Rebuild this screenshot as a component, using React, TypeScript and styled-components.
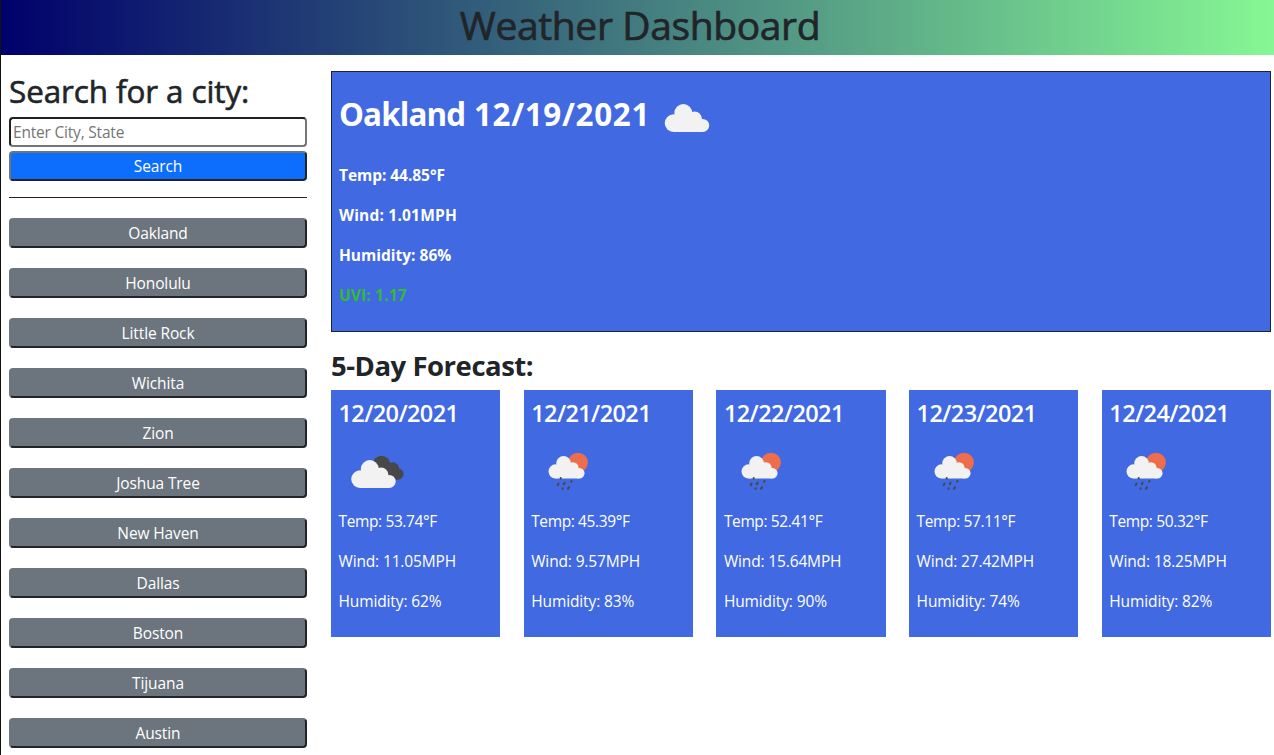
import React from "react";
import styled, { createGlobalStyle } from "styled-components";

const GlobalStyle = createGlobalStyle`
  *, *::before, *::after { box-sizing: border-box; }
  body {
    margin: 0;
    background: #fff;
    color: #212529;
    font-family: "Open Sans", "Noto Sans", sans-serif;
    font-size: 15.5px;
    line-height: 24px;
    overflow: hidden;
  }
  h1, h2, h3, h4, p { margin: 0; white-space: nowrap; }
`;

const Page = styled.div`
  height: 755px;
  overflow: hidden;
  border-left: 1px solid #111;
`;

const Header = styled.header`
  height: 55px;
  text-align: center;
  padding-left: 5px;
  background: linear-gradient(to right, #00006b, #86f794);
`;

const Title = styled.h1`
  font-size: 39px;
  font-weight: 500;
  line-height: 50px;
  letter-spacing: -0.37px;
  -webkit-text-stroke: 0.7px currentColor;
`;

const Columns = styled.div`
  display: flex;
  gap: 24px;
  padding: 16px 3px 0 8px;
`;

const Sidebar = styled.aside`
  flex: 0 0 298px;
`;

const SearchTitle = styled.h2`
  font-size: 31.4px;
  font-weight: 500;
  line-height: 40px;
  margin-bottom: 6px;
  letter-spacing: -0.08px;
  -webkit-text-stroke: 0.6px currentColor;
`;

const SearchInput = styled.input`
  display: block;
  width: 100%;
  height: 30px;
  padding: 1px 2px;
  border: 2px solid;
  border-color: #212121 #767676 #767676 #212121;
  border-radius: 4px;
  background: #fff;
  font: inherit;
  letter-spacing: -0.2px;
  &::placeholder { color: #757575; opacity: 1; }
`;

const Button = styled.button<{ $primary?: boolean }>`
  display: block;
  width: 100%;
  height: 30px;
  padding: 1px 6px;
  margin-top: ${(p) => (p.$primary ? "4px" : "20px")};
  border: 2px solid;
  border-color: #6c757d #212529 #212529 #6c757d;
  border-radius: 4px;
  background: ${(p) => (p.$primary ? "#0d6efd" : "#6c757d")};
  color: #fff;
  font: inherit;
  line-height: 24px;
  letter-spacing: -0.12px;
`;

const Divider = styled.hr`
  height: 1px;
  margin: 16px 0 0;
  border: 0;
  background: #212529;
`;

const Main = styled.main`
  flex: 1;
  min-width: 0;
`;

const Current = styled.section`
  height: 261px;
  padding: 18px 7px 0;
  border: 1px solid #212529;
  background: #4169e1;
  color: #fff;
  font-weight: 700;
`;

const CurrentHead = styled.div`
  display: flex;
  align-items: center;
  height: 50px;
  margin-bottom: 23px;
`;

const CityDate = styled.h2`
  font-size: 31.4px;
  font-weight: 700;
  line-height: 48px;
  padding-bottom: 2px;
  letter-spacing: 0.65px;
`;

const CityName = styled.span`
  letter-spacing: -0.9px;
`;

const Stat = styled.p<{ $good?: boolean; $spacing?: number }>`
  height: 24px;
  margin-bottom: 16px;
  letter-spacing: ${(p) => p.$spacing ?? 0}px;
  color: ${(p) => (p.$good ? "#32bc32" : "inherit")};
`;

const ForecastTitle = styled.h3`
  font-size: 27.5px;
  font-weight: 700;
  line-height: 36px;
  margin: 16px 0 6px;
  letter-spacing: -0.48px;
`;

const Forecast = styled.div`
  display: flex;
  justify-content: space-between;
`;

const DayCard = styled.article`
  width: 18%;
  height: 247px;
  padding: 9px 7.5px 0;
  background: #4169e1;
  color: #fff;
`;

const DayDate = styled.h4`
  font-size: 23.5px;
  font-weight: 600;
  line-height: 29px;
  letter-spacing: -0.6px;
`;

const DayIcon = styled.div`
  height: 81px;
  padding-top: 16px;
`;

const Icon = styled.svg`
  display: block;
  width: 80px;
  height: 60px;
  flex: none;
`;

const WhiteCloud = () => (
  <g fill="#f2f2f2">
    <circle cx="8.8" cy="19.1" r="8.8" />
    <circle cx="18.6" cy="9" r="9" />
    <circle cx="30" cy="14.8" r="7.2" />
    <circle cx="38" cy="21.4" r="6.5" />
    <path d="M8.8 14H30L38 20V27.9H8.8Z" />
  </g>
);

const CloudIcon = () => (
  <Icon viewBox="0 0 80 60">
    <g transform="translate(14.7 19)">
      <WhiteCloud />
    </g>
  </Icon>
);

const BrokenCloudsIcon = () => (
  <Icon viewBox="0 0 80 60">
    <g fill="#484848">
      <circle cx="42.5" cy="20.5" r="8.7" />
      <circle cx="53.5" cy="25" r="6.7" />
      <circle cx="58.8" cy="30" r="5.8" />
      <path d="M40 22H54L58.8 28V35.8H40Z" />
    </g>
    <g transform="translate(12.2 16)">
      <WhiteCloud />
    </g>
  </Icon>
);

const RainIcon = () => (
  <Icon viewBox="0 0 80 60">
    <circle cx="47" cy="18.6" r="9.9" fill="#ec6e4c" />
    <g transform="translate(17.5 12) scale(0.81)">
      <WhiteCloud />
    </g>
    <g stroke="#484848" strokeWidth="2" strokeLinecap="round">
      <path d="M29.7 34v.4M27.5 39.6l-.8 1.6M33.6 38.6l-.8 1.6M40.5 37l-.4.8M31.7 44.4l-.2.4M37.9 43.2l-.8 1.6" />
    </g>
  </Icon>
);

const cities = [
  "Oakland", "Honolulu", "Little Rock", "Wichita", "Zion", "Joshua Tree",
  "New Haven", "Dallas", "Boston", "Tijuana", "Austin",
];

const days = [
  { date: "12/20/2021", temp: "53.74", wind: "11.05", humidity: 62, icon: BrokenCloudsIcon },
  { date: "12/21/2021", temp: "45.39", wind: "9.57", humidity: 83, icon: RainIcon },
  { date: "12/22/2021", temp: "52.41", wind: "15.64", humidity: 90, icon: RainIcon },
  { date: "12/23/2021", temp: "57.11", wind: "27.42", humidity: 74, icon: RainIcon },
  { date: "12/24/2021", temp: "50.32", wind: "18.25", humidity: 82, icon: RainIcon },
];

export default function App() {
  return (
    <>
      <GlobalStyle />
      <Page>
        <Header>
          <Title>Weather Dashboard</Title>
        </Header>
        <Columns>
          <Sidebar>
            <SearchTitle>Search for a city:</SearchTitle>
            <SearchInput placeholder="Enter City, State" />
            <Button $primary>Search</Button>
            <Divider />
            {cities.map((city) => (
              <Button key={city}>{city}</Button>
            ))}
          </Sidebar>
          <Main>
            <Current>
              <CurrentHead>
                <CityDate>
                  <CityName>Oakland</CityName> 12/19/2021
                </CityDate>
                <CloudIcon />
              </CurrentHead>
              <Stat $spacing={-0.05}>Temp: 44.85°F</Stat>
              <Stat $spacing={0.2}>Wind: 1.01MPH</Stat>
              <Stat>Humidity: 86%</Stat>
              <Stat $good $spacing={0.15}>UVI: 1.17</Stat>
            </Current>
            <ForecastTitle>5-Day Forecast:</ForecastTitle>
            <Forecast>
              {days.map((day) => (
                <DayCard key={day.date}>
                  <DayDate>{day.date}</DayDate>
                  <DayIcon>
                    <day.icon />
                  </DayIcon>
                  <Stat $spacing={-0.38}>Temp: {day.temp}°F</Stat>
                  <Stat $spacing={-0.15}>Wind: {day.wind}MPH</Stat>
                  <Stat $spacing={-0.12}>Humidity: {day.humidity}%</Stat>
                </DayCard>
              ))}
            </Forecast>
          </Main>
        </Columns>
      </Page>
    </>
  );
}
